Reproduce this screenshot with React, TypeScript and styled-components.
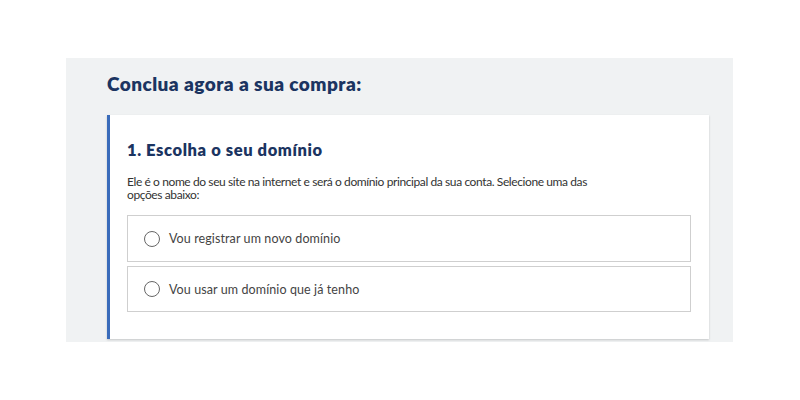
import React from 'react';
import styled, { createGlobalStyle } from 'styled-components';

const Global = createGlobalStyle`
  body {
    margin: 0;
    background: #ffffff;
    font-family: "Lato", "Liberation Sans", sans-serif;
  }
`;

const Page = styled.div`
  padding: 58px 0 0 66px;
`;

const Panel = styled.div`
  background: #f0f2f3;
  width: 667px;
  height: 284px;
  box-sizing: border-box;
  padding: 14px 24px 0 41px;
`;

const Title = styled.h1`
  margin: 0 0 19px;
  font-size: 19px;
  line-height: 24px;
  font-weight: 800;
  letter-spacing: 0.45px;
  color: #1b3461;
`;

const Card = styled.div`
  background: #ffffff;
  width: 602px;
  height: 224px;
  box-sizing: border-box;
  border-left: 3px solid #3a6cba;
  padding: 24px 18px 0 17px;
  box-shadow: 0 1px 2px rgba(0, 0, 0, 0.18);
`;

const Heading = styled.h2`
  margin: 0 0 14px;
  font-size: 16.5px;
  line-height: 22px;
  font-weight: 800;
  letter-spacing: 0.6px;
  color: #1b3461;
`;

const Text = styled.p`
  margin: 0 0 14px;
  max-width: 470px;
  font-size: 12px;
  line-height: 13px;
  color: #333333;
  letter-spacing: -0.4px;
`;

const Options = styled.div`
  display: flex;
  flex-direction: column;
  gap: 4px;
`;

const Option = styled.label`
  display: flex;
  align-items: center;
  gap: 9px;
  height: 47px;
  box-sizing: border-box;
  border: 1px solid #cfcfcf;
  padding-left: 16px;
  font-size: 12.5px;
  letter-spacing: 0.1px;
  color: #444444;
  cursor: pointer;
  & + & {
    height: 46px;
  }
`;

const Radio = styled.span`
  width: 16px;
  height: 16px;
  border: 1.5px solid #666666;
  border-radius: 50%;
  box-sizing: border-box;
  flex-shrink: 0;
`;

const App: React.FC = () => {
  return (
    <Page>
      <Global />
      <Panel>
        <Title>Conclua agora a sua compra:</Title>
        <Card>
          <Heading>1. Escolha o seu domínio</Heading>
          <Text>
            Ele é o nome do seu site na internet e será o domínio principal da sua conta. Selecione uma das
            opções abaixo:
          </Text>
          <Options>
            <Option>
              <Radio />
              Vou registrar um novo domínio
            </Option>
            <Option>
              <Radio />
              Vou usar um domínio que já tenho
            </Option>
          </Options>
        </Card>
      </Panel>
    </Page>
  );
};

export default App;
